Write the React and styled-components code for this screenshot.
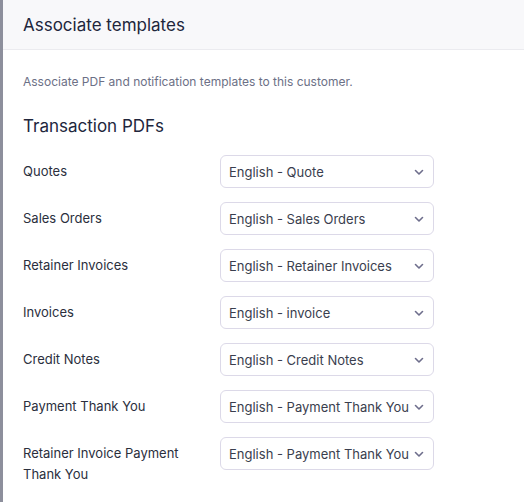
import styled, { createGlobalStyle } from "styled-components";

const GlobalStyle = createGlobalStyle`
  html, body {
    margin: 0;
    padding: 0;
    background: #fff;
    font-family: Inter, "Noto Sans", sans-serif;
  }
`;

const Screen = styled.div`
  display: flex;
  width: 524px;
  height: 502px;
  overflow: hidden;
`;

const Backdrop = styled.div`
  width: 3px;
  flex-shrink: 0;
  background: #8d8f9c;
`;

const Panel = styled.section`
  flex: 1;
  background: #fff;
  display: flex;
  flex-direction: column;
`;

const Header = styled.header`
  height: 49px;
  display: flex;
  align-items: center;
  padding: 0 20px;
  background: #f8f8fa;
  border-bottom: 1px solid #ebebef;
`;

const Title = styled.h1`
  margin: 0;
  font-size: 17px;
  font-weight: 400;
  color: #21263c;
`;

const Body = styled.div`
  padding: 22px 20px 0;
`;

const Description = styled.p`
  margin: 0;
  font-size: 12px;
  line-height: 20px;
  color: #6c7086;
`;

const SectionTitle = styled.h2`
  margin: 23px 0 18px;
  font-size: 17px;
  line-height: 22px;
  font-weight: 400;
  color: #21263c;
`;

const Rows = styled.div`
  display: flex;
  flex-direction: column;
  gap: 14px;
`;

const Row = styled.div`
  display: grid;
  grid-template-columns: 197px 214px;
  align-items: start;
`;

const Label = styled.div`
  padding: 6px 20px 0 0;
  font-size: 13px;
  line-height: 21px;
  color: #2b2f3d;
`;

const Select = styled.div`
  height: 33px;
  box-sizing: border-box;
  display: flex;
  align-items: center;
  padding: 0 8px 0 8px;
  border: 1px solid #dcd9e8;
  border-radius: 6px;
  background: #fff;
`;

const Value = styled.span`
  flex: 1;
  min-width: 0;
  white-space: nowrap;
  overflow: hidden;
  font-size: 13px;
  color: #3a3e4e;
`;

const Chevron = () => (
  <svg width="12" height="12" viewBox="0 0 12 12" style={{ flexShrink: 0, marginLeft: 2 }}>
    <path d="M2.5 4.5 6 8l3.5-3.5" fill="none" stroke="#6e6e8c" strokeWidth="1.6" strokeLinecap="round" strokeLinejoin="round" />
  </svg>
);

const templates = [
  ["Quotes", "English - Quote"],
  ["Sales Orders", "English - Sales Orders"],
  ["Retainer Invoices", "English - Retainer Invoices"],
  ["Invoices", "English - invoice"],
  ["Credit Notes", "English - Credit Notes"],
  ["Payment Thank You", "English - Payment Thank You"],
  ["Retainer Invoice Payment Thank You", "English - Payment Thank You"],
];

export default function App() {
  return (
    <>
      <GlobalStyle />
      <Screen>
        <Backdrop />
        <Panel>
          <Header>
            <Title>Associate templates</Title>
          </Header>
          <Body>
            <Description>Associate PDF and notification templates to this customer.</Description>
            <SectionTitle>Transaction PDFs</SectionTitle>
            <Rows>
              {templates.map(([label, value]) => (
                <Row key={label}>
                  <Label>{label}</Label>
                  <Select>
                    <Value>{value}</Value>
                    <Chevron />
                  </Select>
                </Row>
              ))}
            </Rows>
          </Body>
        </Panel>
      </Screen>
    </>
  );
}
